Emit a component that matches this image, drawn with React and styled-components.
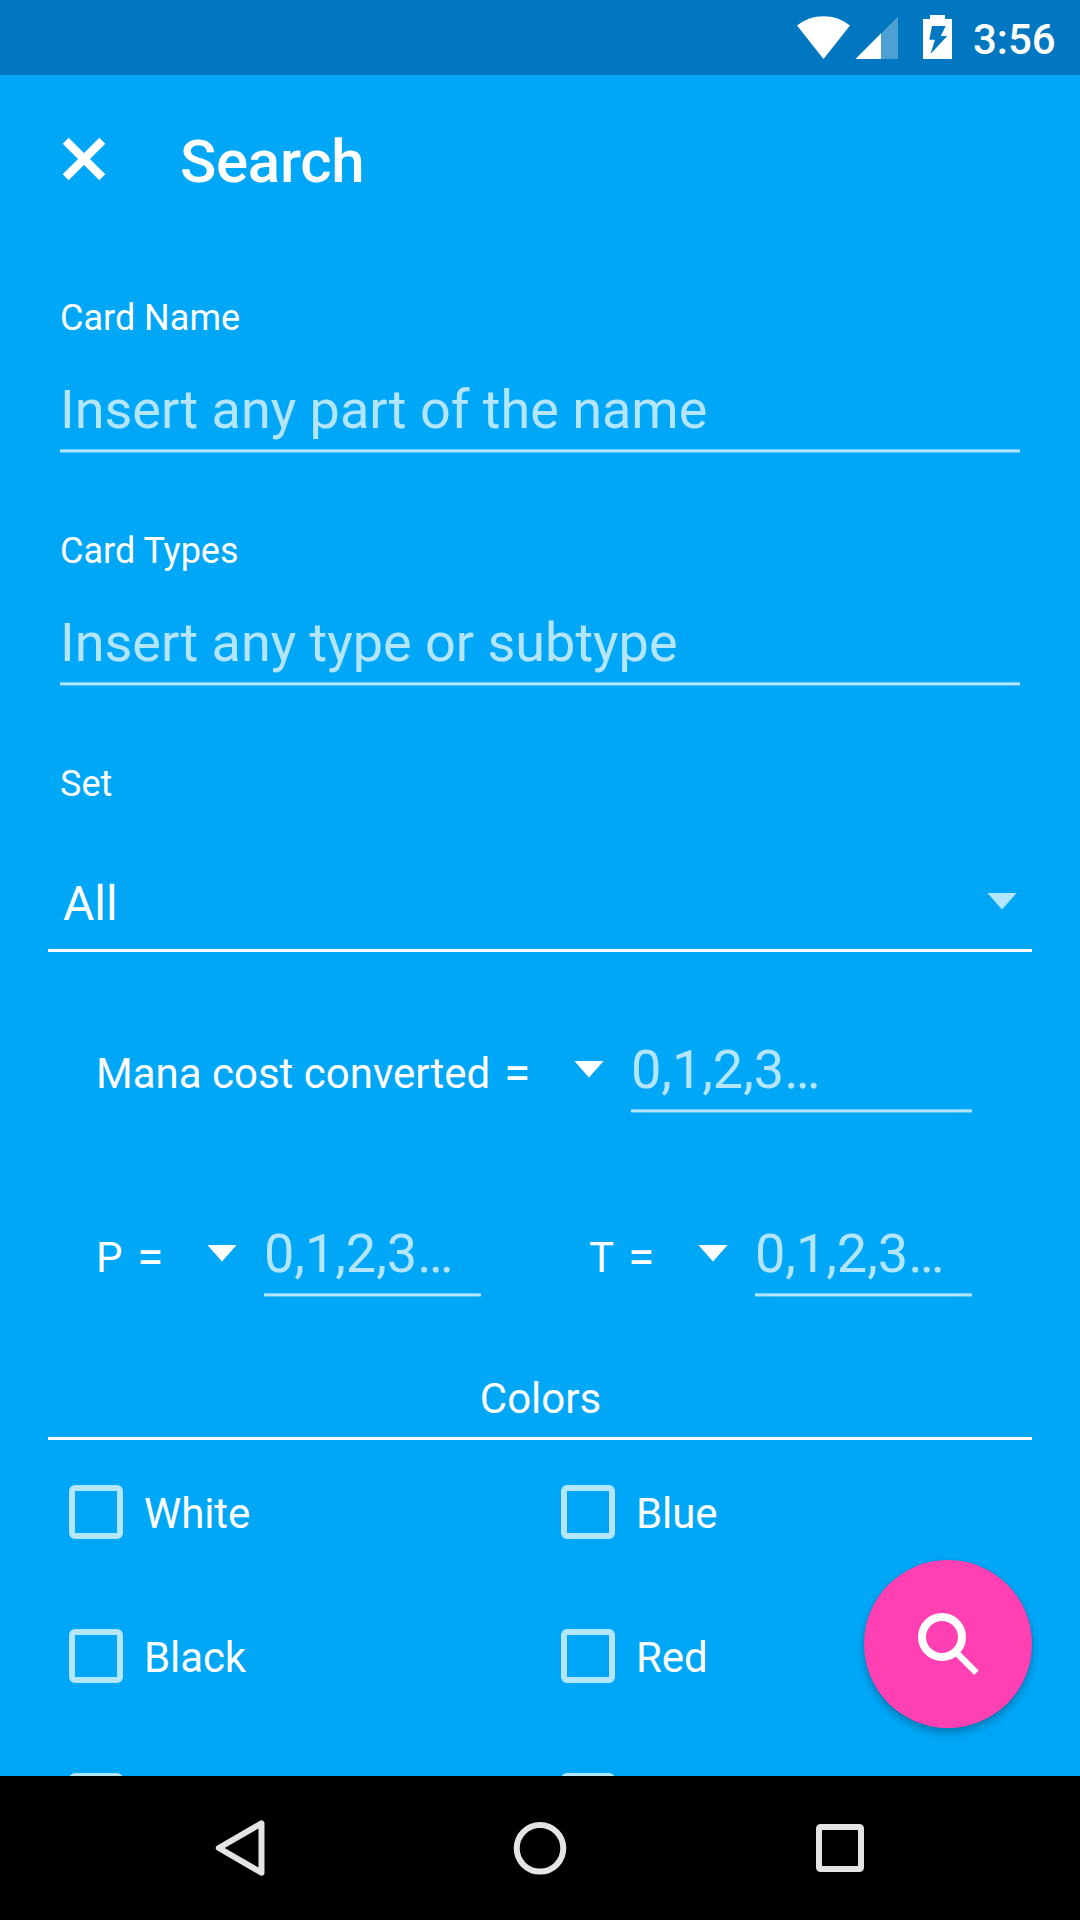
import React from "react";
import styled, { createGlobalStyle } from "styled-components";

const color = {
  bg: "#00a7f7",
  status: "#0077c0",
  accent: "#ff40b3",
  hint: "rgba(255, 255, 255, 0.7)",
  nav: "#e4e4e4",
};

const GlobalStyle = createGlobalStyle`
  * { box-sizing: border-box; }
  body { margin: 0; background: #000; }
`;

const Screen = styled.div`
  position: relative;
  display: flex;
  flex-direction: column;
  width: 1080px;
  height: 1920px;
  overflow: hidden;
  background: ${color.bg};
  color: #fff;
  font-family: Roboto, "Noto Sans", sans-serif;
`;

const StatusBar = styled.header`
  display: flex;
  flex: none;
  justify-content: flex-end;
  height: 75px;
  padding-right: 25px;
  background: ${color.status};
`;

const StatusIcons = styled.svg`
  width: 160px;
  height: 75px;
  margin-right: 20px;
`;

const Clock = styled.time`
  width: 82px;
  padding-top: 15px;
  font-size: 42px;
  line-height: 50px;
  font-weight: 500;
  white-space: nowrap;
`;

const AppBar = styled.div`
  display: flex;
  flex: none;
  align-items: center;
  height: 168px;
  padding-left: 60px;
  gap: 72px;
`;

const CloseIcon = styled.svg`
  width: 48px;
  height: 48px;
`;

const Title = styled.h1`
  margin: 0;
  padding-top: 5px;
  font-size: 60px;
  line-height: 70px;
  font-weight: 500;
  letter-spacing: -0.3px;
`;

const Form = styled.main`
  display: flex;
  flex: 1;
  flex-direction: column;
  min-height: 0;
  padding: 54px 48px 0;
  overflow: hidden;
`;

const Field = styled.section`
  flex: none;
  margin: 0 12px 77px;
`;

const FieldLabel = styled.div`
  margin-bottom: ${(p) => p.$gap ?? 0}px;
  font-size: 36px;
  line-height: 42px;
`;

const Input = styled.div`
  height: 75px;
  background: linear-gradient(
      rgba(255, 255, 255, 0.45) 1px,
      rgba(255, 255, 255, 0.7) 1px,
      rgba(255, 255, 255, 0.7) 3px,
      rgba(255, 255, 255, 0.3) 3px
    )
    bottom / 100% 4px no-repeat;
  color: ${color.hint};
  font-size: 54px;
  line-height: 64px;
  letter-spacing: -0.02px;
  white-space: nowrap;
`;

const SetLabel = styled(FieldLabel)`
  margin-left: 12px;
`;

const Select = styled.div`
  display: flex;
  flex: none;
  justify-content: space-between;
  height: 147px;
  padding: 71px 15px 0;
  border-bottom: 3px solid #fff;
  font-size: 48px;
  line-height: 56px;
`;

const CaretSvg = styled.svg`
  display: block;
  width: 30px;
  height: 17px;
  margin-top: ${(p) => p.$top}px;
  fill: ${(p) => (p.$dim ? color.hint : "#fff")};
`;

const StatRow = styled.div`
  display: flex;
  flex: none;
  justify-content: space-between;
  height: 75px;
  margin: ${(p) => p.$top}px 60px 0 48px;
`;

const Stat = styled.div`
  display: grid;
  grid-template-columns: ${(p) => p.$label}px 70px 57px ${(p) => p.$input}px;
  align-items: start;
`;

const StatText = styled.span`
  padding-top: 11px;
  font-size: 42px;
  line-height: 50px;
  white-space: nowrap;
`;

const Operator = styled.span`
  padding-top: 7px;
  font-size: 48px;
  line-height: 56px;
`;

const SectionTitle = styled.h2`
  flex: none;
  height: 66px;
  margin: 77px 0 0;
  padding-left: 1px;
  border-bottom: 3px solid #fff;
  font-size: 42px;
  line-height: 50px;
  font-weight: 400;
  text-align: center;
`;

const Options = styled.div`
  display: grid;
  flex: none;
  grid-template-columns: 1fr 1fr;
  grid-auto-rows: 144px;
`;

const Option = styled.label`
  display: flex;
  align-items: center;
  gap: 21px;
  padding-left: 21px;
  font-size: 42px;
  line-height: 50px;
`;

const Box = styled.span`
  width: 54px;
  height: 54px;
  border: 6px solid ${color.hint};
  border-radius: 6px;
`;

const OptionText = styled.span`
  padding-top: 3px;
  letter-spacing: -0.1px;
`;

const Fab = styled.button`
  position: absolute;
  top: 1560px;
  left: 864px;
  width: 168px;
  height: 168px;
  padding: 0;
  border: 0;
  border-radius: 50%;
  background: ${color.accent};
  box-shadow: 0 5px 8px rgba(0, 0, 0, 0.25), 0 0 3px rgba(0, 0, 0, 0.12);
`;

const FabIcon = styled.svg`
  display: block;
  width: 168px;
  height: 168px;
`;

const NavBar = styled.nav`
  display: flex;
  flex: none;
  justify-content: center;
  height: 144px;
  gap: 156px;
  background: #000;
`;

const NavIcon = styled.svg`
  width: 144px;
  height: 144px;
  fill: none;
  stroke: ${color.nav};
  stroke-width: 6;
  stroke-linejoin: round;
`;

const Caret = ({ top, dim }) => (
  <CaretSvg viewBox="0 0 30 17" $top={top} $dim={dim}>
    <path d="M0.4 0H29.6L15 16.5Z" />
  </CaretSvg>
);

const fields = [
  { label: "Card Name", hint: "Insert any part of the name" },
  { label: "Card Types", hint: "Insert any type or subtype" },
];

const options = ["White", "Blue", "Black", "Red", "", ""];

const StatField = ({ label, labelWidth, inputWidth }) => (
  <Stat $label={labelWidth} $input={inputWidth}>
    <StatText>{label}</StatText>
    <Operator>=</Operator>
    <Caret top={23} />
    <Input>0,1,2,3…</Input>
  </Stat>
);

export default function App() {
  return (
    <Screen>
      <GlobalStyle />
      <StatusBar>
        <StatusIcons viewBox="793 0 160 75" fill="#fff">
          <path d="M797 25.5C812 13 835 13 850 25.5L823.5 59Z" />
          <path d="M898 16.5V59H855.5Z" opacity="0.3" />
          <path d="M881 33.5V59H855.5Z" />
          <path
            fillRule="evenodd"
            d="M930 15H945V19H952V59H923V19H930ZM932 26L929.3 39.7H935L930.5 54L947.3 36H940.7L945.7 26Z"
          />
        </StatusIcons>
        <Clock>3:56</Clock>
      </StatusBar>
      <AppBar>
        <CloseIcon viewBox="60 135 48 48">
          <path
            d="M65.7 140.7L102.3 177.3M102.3 140.7L65.7 177.3"
            stroke="#fff"
            strokeWidth="8.4"
          />
        </CloseIcon>
        <Title>Search</Title>
      </AppBar>
      <Form>
        {fields.map((f) => (
          <Field key={f.label}>
            <FieldLabel $gap={39}>{f.label}</FieldLabel>
            <Input>{f.hint}</Input>
          </Field>
        ))}
        <SetLabel>Set</SetLabel>
        <Select>
          <span>All</span>
          <Caret top={17} dim />
        </Select>
        <StatRow $top={86}>
          <StatField label="Mana cost converted" labelWidth={408} inputWidth={341} />
        </StatRow>
        <StatRow $top={109}>
          <StatField label="P" labelWidth={41} inputWidth={217} />
          <StatField label="T" labelWidth={39} inputWidth={217} />
        </StatRow>
        <SectionTitle>Colors</SectionTitle>
        <Options>
          {options.map((name, i) => (
            <Option key={i}>
              <Box />
              {name && <OptionText>{name}</OptionText>}
            </Option>
          ))}
        </Options>
      </Form>
      <NavBar>
        <NavIcon viewBox="168 1776 144 144">
          <path d="M218.8 1848L261.5 1823.3V1872.7Z" />
        </NavIcon>
        <NavIcon viewBox="468 1776 144 144">
          <circle cx="540" cy="1848.3" r="23.3" />
        </NavIcon>
        <NavIcon viewBox="768 1776 144 144">
          <rect x="819" y="1827" width="42" height="42" rx="1.5" />
        </NavIcon>
      </NavBar>
      <Fab aria-label="Search">
        <FabIcon viewBox="864 1560 168 168" fill="none" stroke="#fff">
          <circle cx="942" cy="1637" r="20" strokeWidth="8" />
          <path d="M956 1652.3L976.4 1672.7" strokeWidth="6.3" />
        </FabIcon>
      </Fab>
    </Screen>
  );
}
